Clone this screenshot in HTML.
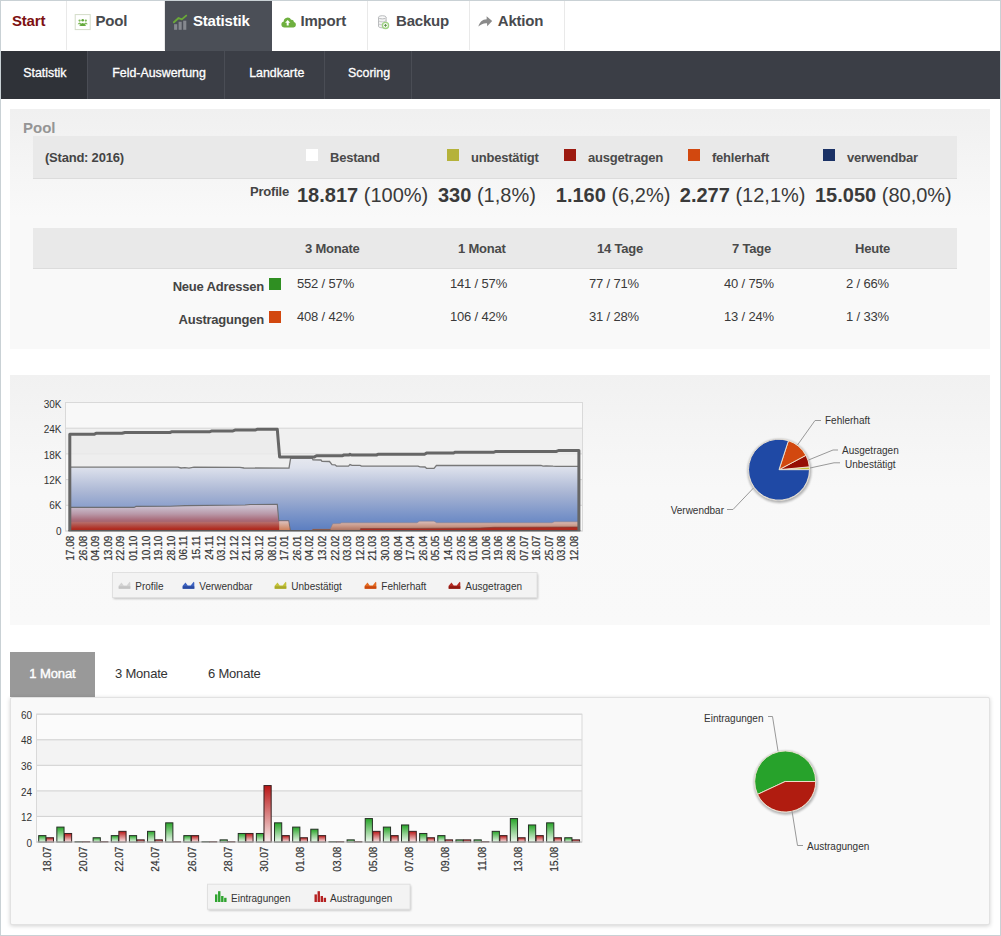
<!DOCTYPE html>
<html><head><meta charset="utf-8"><title>Statistik</title>
<style>
html,body{margin:0;padding:0;}
body{width:1001px;height:936px;overflow:hidden;background:#fff;font-family:"Liberation Sans",sans-serif;color:#333;position:relative;}
#frame{position:absolute;left:0;top:0;width:999px;height:934px;border:1px solid #c9d1d5;z-index:50;pointer-events:none;}
.abs{position:absolute;white-space:nowrap;}
.topnav{position:absolute;left:1px;top:1px;width:999px;height:49px;background:#fff;}
.tab{position:absolute;top:0;height:49px;border-right:1px solid #e9e9e9;box-sizing:border-box;font-weight:bold;font-size:15px;color:#484a4e;line-height:40px;letter-spacing:-0.2px;}
.tab span{position:absolute;top:0;}
.tab.act{background:#4b4f57;color:#fff;border-right:none;height:51px;}
.subnav{position:absolute;left:1px;top:51px;width:999px;height:47.5px;background:#3b3e46;}
.sub{position:absolute;top:0;height:47.5px;border-right:1px solid #4a4d55;box-sizing:border-box;color:#fff;font-size:12.4px;line-height:43px;font-weight:normal;-webkit-text-stroke:0.3px #fff;}
.sub.act{background:#2f3238;}
.panel{position:absolute;left:10px;width:980px;}
.b13{font-size:13px;font-weight:bold;color:#444;letter-spacing:-0.22px;}
.hd{font-size:13px;font-weight:bold;color:#4a4a4a;letter-spacing:-0.22px;}
.val{font-size:13px;color:#3a3a3a;letter-spacing:-0.17px;}
.big{font-size:20px;color:#3a3a3a;}
.big b{font-weight:bold;}
.sw{position:absolute;width:12px;height:12px;}
.lg{font-size:11px;color:#333;}
</style></head><body>
<div id="frame"></div>

<div class="topnav">
<div class="tab" style="left:0px;width:66px;"><span style="left:11px;color:#7d1111;">Start</span></div>
<div class="tab" style="left:66px;width:98px;"><span style="left:28.5px;">Pool</span></div>
<div class="tab act" style="left:164px;width:106.5px;"><span style="left:28px;">Statistik</span></div>
<div class="tab" style="left:270.5px;width:96.5px;"><span style="left:29.0px;">Import</span></div>
<div class="tab" style="left:367px;width:102px;"><span style="left:28px;">Backup</span></div>
<div class="tab" style="left:469px;width:94.5px;"><span style="left:27.80000000000001px;">Aktion</span></div>
<svg class="abs" style="left:72.5px;top:12.5px" width="18" height="18" viewBox="0 0 18 18">
<rect x="1.2" y="0.6" width="15" height="15" fill="#fff" stroke="#d3dcc8" stroke-width="1"/>
<circle cx="5.6" cy="6.6" r="1.15" fill="#7fba58"/><circle cx="8.7" cy="6.3" r="1.3" fill="#62a83a"/><circle cx="11.8" cy="6.6" r="1.15" fill="#7fba58"/>
<path d="M3.6 10.3 q2 -3.4 4 0z M9.8 10.3 q2 -3.4 4 0z" fill="#7fba58"/><path d="M5.2 11.4 q3.5 -5 7 0 q-3.5 1.4 -7 0z" fill="#62a83a"/>
</svg>
<svg class="abs" style="left:171px;top:12px" width="18" height="19" viewBox="0 0 18 19">
<rect x="2.1" y="11.2" width="3.1" height="5.6" fill="#85888e"/><rect x="6.6" y="8.8" width="3.1" height="8" fill="#85888e"/><rect x="11.2" y="7.7" width="3.1" height="9.1" fill="#85888e"/>
<path d="M1.9 9.3 L6.6 5 L9.8 6.4 L14.2 2.6" fill="none" stroke="#6aa838" stroke-width="1.9" stroke-linecap="round" stroke-linejoin="round"/>
</svg>
<svg class="abs" style="left:279px;top:14px" width="18" height="14" viewBox="0 0 18 14">
<path d="M4.4 12.5 a3.1 3.1 0 0 1 -0.7 -6.1 a3.9 3.9 0 0 1 7.4 -1.6 a2.6 2.6 0 0 1 2.9 2.1 a2.9 2.9 0 0 1 -0.5 5.6z" fill="#6fb03f"/>
<path d="M7.7 4.9 L10.3 7.8 H8.7 V10.6 H6.7 V7.8 H5.1z" fill="#fff"/>
</svg>
<svg class="abs" style="left:375px;top:13px" width="17" height="18" viewBox="0 0 17 18">
<path d="M2.5 3.3 v9 c0 2 7.6 2 7.6 0 v-9" fill="#f3f3f3" stroke="#b9bbbd" stroke-width="1"/>
<ellipse cx="6.3" cy="3.3" rx="3.8" ry="1.6" fill="#fafafa" stroke="#b9bbbd" stroke-width="1"/>
<path d="M2.5 6.3 c0 2 7.6 2 7.6 0 M2.5 9.3 c0 2 7.6 2 7.6 0" fill="none" stroke="#c4c6c8" stroke-width="1"/>
<circle cx="9.5" cy="11.4" r="3.1" fill="#f4faef" stroke="#9fd283" stroke-width="1.3"/>
<path d="M8.1 11.4 H10.9 M9.5 10 V12.8" stroke="#5a8a4a" stroke-width="0.9" fill="none"/>
</svg>
<svg class="abs" style="left:476px;top:14px" width="17" height="14" viewBox="0 0 17 14">
<path d="M9.6 1.3 L15.2 6.1 L10.2 11.2 L10 8.3 C6.6 8 4 9.3 1.4 11.6 C2.4 7.2 5.4 4.4 9.7 4.2z" fill="#8b8b8b"/>
</svg>
</div>
<div class="subnav">
<div class="sub act" style="left:0px;width:87px;"><span style="position:absolute;left:22.2px;top:0.6px;">Statistik</span></div>
<div class="sub" style="left:87px;width:137px;"><span style="position:absolute;left:24.200000000000003px;top:0.6px;">Feld-Auswertung</span></div>
<div class="sub" style="left:224px;width:100px;"><span style="position:absolute;left:24.19999999999999px;top:0.6px;">Landkarte</span></div>
<div class="sub" style="left:324px;width:87px;"><span style="position:absolute;left:23.100000000000023px;top:0.6px;">Scoring</span></div>
</div>
<div class="panel" style="top:109.2px;height:239.9px;background:linear-gradient(#f0f0f0,#f9f9f9 45%,#f9f9f9);"></div>
<div class="abs" style="left:23px;top:119px;font-size:15px;font-weight:bold;color:#959595;">Pool</div>
<div class="abs" style="left:33px;top:136px;width:924px;height:42.5px;background:#e9e9e9;border-bottom:1px solid #dcdcdc;box-sizing:border-box;"></div>
<div class="abs b13" style="left:45px;top:150px;">(Stand: 2016)</div>
<div class="sw" style="left:306.3px;top:148.6px;background:#ffffff;"></div>
<div class="abs hd" style="left:330px;top:150px;">Bestand</div>
<div class="sw" style="left:447.3px;top:148.6px;background:#b5b23a;"></div>
<div class="abs hd" style="left:471px;top:150px;">unbestätigt</div>
<div class="sw" style="left:564.3px;top:148.6px;background:#9c1a10;"></div>
<div class="abs hd" style="left:588px;top:150px;">ausgetragen</div>
<div class="sw" style="left:688.3px;top:148.6px;background:#d2480f;"></div>
<div class="abs hd" style="left:712px;top:150px;">fehlerhaft</div>
<div class="sw" style="left:823.3px;top:148.6px;background:#1b3266;"></div>
<div class="abs hd" style="left:847px;top:150px;">verwendbar</div>
<div class="abs b13" style="left:189px;width:100px;text-align:right;top:184px;">Profile</div>
<div class="abs big" style="left:297px;top:184px;"><b>18.817</b> (100%)</div>
<div class="abs big" style="left:438px;top:184px;"><b>330</b> (1,8%)</div>
<div class="abs big" style="left:555.8px;top:184px;"><b>1.160</b> (6,2%)</div>
<div class="abs big" style="left:679.8px;top:184px;"><b>2.277</b> (12,1%)</div>
<div class="abs big" style="left:815px;top:184px;"><b>15.050</b> (80,0%)</div>
<div class="abs" style="left:33px;top:228.4px;width:924px;height:40.4px;background:#e9e9e9;border-bottom:1px solid #dcdcdc;box-sizing:border-box;"></div>
<div class="abs hd" style="left:305px;top:241px;">3 Monate</div>
<div class="abs hd" style="left:458px;top:241px;">1 Monat</div>
<div class="abs hd" style="left:597px;top:241px;">14 Tage</div>
<div class="abs hd" style="left:732px;top:241px;">7 Tage</div>
<div class="abs hd" style="left:855px;top:241px;">Heute</div>
<div class="abs b13" style="left:64px;width:200px;text-align:right;top:279.3px;">Neue Adressen</div>
<div class="sw" style="left:269px;top:278.3px;background:#2f8f22;"></div>
<div class="abs val" style="left:297px;top:275.6px;">552 / 57%</div>
<div class="abs val" style="left:450px;top:275.6px;">141 / 57%</div>
<div class="abs val" style="left:589px;top:275.6px;">77 / 71%</div>
<div class="abs val" style="left:724px;top:275.6px;">40 / 75%</div>
<div class="abs val" style="left:846px;top:275.6px;">2 / 66%</div>
<div class="abs b13" style="left:64px;width:200px;text-align:right;top:312.4px;">Austragungen</div>
<div class="sw" style="left:269px;top:311.4px;background:#d2480f;"></div>
<div class="abs val" style="left:297px;top:309px;">408 / 42%</div>
<div class="abs val" style="left:450px;top:309px;">106 / 42%</div>
<div class="abs val" style="left:589px;top:309px;">31 / 28%</div>
<div class="abs val" style="left:724px;top:309px;">13 / 24%</div>
<div class="abs val" style="left:846px;top:309px;">1 / 33%</div>
<div class="panel" style="top:375px;height:250px;background:linear-gradient(#f1f1f1,#f8f8f8 45%,#f9f9f9);"></div>
<svg class="abs" style="left:0;top:375px" width="1001" height="250" viewBox="0 375 1001 250" font-family="Liberation Sans, sans-serif">
<defs>
<linearGradient id="gblue" gradientUnits="userSpaceOnUse" x1="0" y1="458" x2="0" y2="531"><stop offset="0" stop-color="#e6e8ef"/><stop offset="0.13" stop-color="#dde1ec"/><stop offset="0.47" stop-color="#aab6d4"/><stop offset="0.78" stop-color="#7a94c8"/><stop offset="1" stop-color="#5a7dc0"/></linearGradient>
<linearGradient id="gred" gradientUnits="userSpaceOnUse" x1="0" y1="504" x2="0" y2="531"><stop offset="0" stop-color="#d3c8d4"/><stop offset="0.13" stop-color="#c9bccb"/><stop offset="0.37" stop-color="#b998a8"/><stop offset="0.6" stop-color="#a86a78"/><stop offset="0.66" stop-color="#a8666e"/><stop offset="0.69" stop-color="#b86a66"/><stop offset="0.78" stop-color="#b2524a"/><stop offset="0.92" stop-color="#b02c21"/><stop offset="1" stop-color="#a8281e"/></linearGradient>
<linearGradient id="gred2" gradientUnits="userSpaceOnUse" x1="0" y1="521" x2="0" y2="531"><stop offset="0" stop-color="#dcc0bc"/><stop offset="0.5" stop-color="#c89888"/><stop offset="1" stop-color="#a86a58"/></linearGradient>
<linearGradient id="gtan0" gradientUnits="userSpaceOnUse" x1="0" y1="521" x2="0" y2="531"><stop offset="0" stop-color="#dcc4c0"/><stop offset="1" stop-color="#cc7a52"/></linearGradient>
<linearGradient id="ggreen" x1="0" y1="0" x2="0" y2="1"><stop offset="0" stop-color="#27a428"/><stop offset="1" stop-color="#eef8ee"/></linearGradient>
<linearGradient id="gbarred" x1="0" y1="0" x2="0" y2="1"><stop offset="0" stop-color="#b91616"/><stop offset="1" stop-color="#f8eaea"/></linearGradient>
<filter id="sh" x="-20%" y="-20%" width="140%" height="140%"><feGaussianBlur stdDeviation="1.2"/></filter>
</defs>
<rect x="65.5" y="402.5" width="517.0" height="128.5" fill="#f8f8f8"/>
<rect x="65.5" y="428.2" width="517.0" height="25.7" fill="#f0f0f0"/>
<rect x="65.5" y="479.6" width="517.0" height="25.7" fill="#f0f0f0"/>
<line x1="65.5" x2="582.5" y1="402.5" y2="402.5" stroke="#d6d6d6" stroke-width="1"/>
<line x1="65.5" x2="582.5" y1="428.2" y2="428.2" stroke="#d6d6d6" stroke-width="1"/>
<line x1="65.5" x2="582.5" y1="453.9" y2="453.9" stroke="#d6d6d6" stroke-width="1"/>
<line x1="65.5" x2="582.5" y1="479.6" y2="479.6" stroke="#d6d6d6" stroke-width="1"/>
<line x1="65.5" x2="582.5" y1="505.3" y2="505.3" stroke="#d6d6d6" stroke-width="1"/>
<line x1="65.5" x2="582.5" y1="531.0" y2="531.0" stroke="#d6d6d6" stroke-width="1"/>
<rect x="65.5" y="402.5" width="517.0" height="128.5" fill="none" stroke="#d9d9d9"/>
<text x="61.5" y="407.9" font-size="10" text-anchor="end" fill="#333">30K</text>
<text x="61.5" y="433.3" font-size="10" text-anchor="end" fill="#333">24K</text>
<text x="61.5" y="458.6" font-size="10" text-anchor="end" fill="#333">18K</text>
<text x="61.5" y="484.0" font-size="10" text-anchor="end" fill="#333">12K</text>
<text x="61.5" y="509.3" font-size="10" text-anchor="end" fill="#333">6K</text>
<text x="61.5" y="534.6" font-size="10" text-anchor="end" fill="#333">0</text>
<polygon points="69.8,531 69.8,434.3 94,434.3 96,433.3 122,433.3 125,432.5 170,432.5 172,431.7 210,431.7 212,430.9 233,430.9 235,430.1 255,430.1 257,429.3 277.3,429.3 279.6,456.9 314.5,456.9 316.5,455.8 342,455.8 344,455 349,455 350,454.3 351.5,455 376.5,455 378.5,454.2 424.5,454.2 426.5,453.1 453.3,453.1 455.3,452.2 494,452.2 496,451.4 556.5,451.4 558.5,450.5 578.9,450.5 578.9,531" fill="#ebebeb" opacity="0.8"/>
<polygon points="69.8,531 69.8,467.2 178,467.2 181,468 185,467.6 189,468.1 194,467.2 240,467.3 244,468 289,468.1 290.6,458.3 312.4,458.3 313,459.8 321,460 322,461.3 329.5,461.5 332,464.6 335,464.8 336.5,466.1 348.5,466.1 350,464.6 352,465.4 360,465.4 361.5,466.1 418,466.1 420,466.9 425,467 426.5,468.3 434,468.3 436.4,465.5 541,465.5 543,466.2 546,465.8 553,466.2 556,466.3 578.9,466.3 578.9,531" fill="url(#gblue)"/>
<polygon points="69.8,531 69.8,507.4 134,507.4 136,506.4 170,506.2 185,505.6 245,505 250,504.5 277.3,504.4 278.8,520.8 288.6,520.8 290.5,531" fill="url(#gred)" />
<polyline points="69.8,507.4 134,507.4 136,506.4 170,506.2 185,505.6 245,505 250,504.5 277.3,504.4 278.8,520.8 288.6,520.8 290.5,531" fill="none" stroke="#6e6e72" stroke-width="1.1"/>
<polygon points="279.2,531 279.2,521.3 288.3,521.3 290,531" fill="url(#gtan0)"/>
<polygon points="312,531 312.6,529 330.3,529 332.7,523.8 340,523.6 341.5,522.8 417,522.8 419.5,521.2 434,521.2 436.7,522.8 552,522.8 554.5,521.8 578.9,521.8 578.9,531" fill="url(#gred2)"/>
<polyline points="312,531 312.6,529 330.3,529 332.7,523.8 340,523.6 341.5,522.8 417,522.8 419.5,521.2 434,521.2 436.7,522.8 552,522.8 554.5,521.8 578.9,521.8" fill="none" stroke="#8a7a80" stroke-width="0.7" opacity="0.7"/>
<polygon points="312,531 312.6,529 330.3,529 331.2,531" fill="#8a5a4c"/>
<polygon points="360,531 360.6,528.6 420,528.4 480,528 494,527.3 578.9,527 578.9,531" fill="#ae2a1f"/>
<polyline points="360,531 360.6,528.6 420,528.4 480,528 494,527.3 578.9,527" fill="none" stroke="#80443c" stroke-width="0.7"/>
<polyline points="69.8,467.2 178,467.2 181,468 185,467.6 189,468.1 194,467.2 240,467.3 244,468 289,468.1 290.6,458.3 312.4,458.3 313,459.8 321,460 322,461.3 329.5,461.5 332,464.6 335,464.8 336.5,466.1 348.5,466.1 350,464.6 352,465.4 360,465.4 361.5,466.1 418,466.1 420,466.9 425,467 426.5,468.3 434,468.3 436.4,465.5 541,465.5 543,466.2 546,465.8 553,466.2 556,466.3 578.9,466.3" fill="none" stroke="#787878" stroke-width="1.3"/>
<line x1="68.4" x2="580.3" y1="530.8" y2="530.8" stroke="#5a5a5a" stroke-width="1.5"/>
<polyline points="69.8,531 69.8,434.3 94,434.3 96,433.3 122,433.3 125,432.5 170,432.5 172,431.7 210,431.7 212,430.9 233,430.9 235,430.1 255,430.1 257,429.3 277.3,429.3 279.6,456.9 314.5,456.9 316.5,455.8 342,455.8 344,455 349,455 350,454.3 351.5,455 376.5,455 378.5,454.2 424.5,454.2 426.5,453.1 453.3,453.1 455.3,452.2 494,452.2 496,451.4 556.5,451.4 558.5,450.5 578.9,450.5 578.9,531" fill="none" stroke="#666" stroke-width="3" stroke-linejoin="round"/>
<text transform="translate(74.00,535.7) rotate(-90)" font-size="10" text-anchor="end" fill="#333" stroke="#333" stroke-width="0.2">17.08</text>
<text transform="translate(86.60,535.7) rotate(-90)" font-size="10" text-anchor="end" fill="#333" stroke="#333" stroke-width="0.2">26.08</text>
<text transform="translate(99.20,535.7) rotate(-90)" font-size="10" text-anchor="end" fill="#333" stroke="#333" stroke-width="0.2">04.09</text>
<text transform="translate(111.80,535.7) rotate(-90)" font-size="10" text-anchor="end" fill="#333" stroke="#333" stroke-width="0.2">13.09</text>
<text transform="translate(124.40,535.7) rotate(-90)" font-size="10" text-anchor="end" fill="#333" stroke="#333" stroke-width="0.2">22.09</text>
<text transform="translate(137.00,535.7) rotate(-90)" font-size="10" text-anchor="end" fill="#333" stroke="#333" stroke-width="0.2">01.10</text>
<text transform="translate(149.60,535.7) rotate(-90)" font-size="10" text-anchor="end" fill="#333" stroke="#333" stroke-width="0.2">10.10</text>
<text transform="translate(162.20,535.7) rotate(-90)" font-size="10" text-anchor="end" fill="#333" stroke="#333" stroke-width="0.2">19.10</text>
<text transform="translate(174.80,535.7) rotate(-90)" font-size="10" text-anchor="end" fill="#333" stroke="#333" stroke-width="0.2">28.10</text>
<text transform="translate(187.40,535.7) rotate(-90)" font-size="10" text-anchor="end" fill="#333" stroke="#333" stroke-width="0.2">06.11</text>
<text transform="translate(200.00,535.7) rotate(-90)" font-size="10" text-anchor="end" fill="#333" stroke="#333" stroke-width="0.2">15.11</text>
<text transform="translate(212.60,535.7) rotate(-90)" font-size="10" text-anchor="end" fill="#333" stroke="#333" stroke-width="0.2">24.11</text>
<text transform="translate(225.20,535.7) rotate(-90)" font-size="10" text-anchor="end" fill="#333" stroke="#333" stroke-width="0.2">03.12</text>
<text transform="translate(237.80,535.7) rotate(-90)" font-size="10" text-anchor="end" fill="#333" stroke="#333" stroke-width="0.2">12.12</text>
<text transform="translate(250.40,535.7) rotate(-90)" font-size="10" text-anchor="end" fill="#333" stroke="#333" stroke-width="0.2">21.12</text>
<text transform="translate(263.00,535.7) rotate(-90)" font-size="10" text-anchor="end" fill="#333" stroke="#333" stroke-width="0.2">30.12</text>
<text transform="translate(275.60,535.7) rotate(-90)" font-size="10" text-anchor="end" fill="#333" stroke="#333" stroke-width="0.2">08.01</text>
<text transform="translate(288.20,535.7) rotate(-90)" font-size="10" text-anchor="end" fill="#333" stroke="#333" stroke-width="0.2">17.01</text>
<text transform="translate(300.80,535.7) rotate(-90)" font-size="10" text-anchor="end" fill="#333" stroke="#333" stroke-width="0.2">26.01</text>
<text transform="translate(313.40,535.7) rotate(-90)" font-size="10" text-anchor="end" fill="#333" stroke="#333" stroke-width="0.2">04.02</text>
<text transform="translate(326.00,535.7) rotate(-90)" font-size="10" text-anchor="end" fill="#333" stroke="#333" stroke-width="0.2">13.02</text>
<text transform="translate(338.60,535.7) rotate(-90)" font-size="10" text-anchor="end" fill="#333" stroke="#333" stroke-width="0.2">22.02</text>
<text transform="translate(351.20,535.7) rotate(-90)" font-size="10" text-anchor="end" fill="#333" stroke="#333" stroke-width="0.2">03.03</text>
<text transform="translate(363.80,535.7) rotate(-90)" font-size="10" text-anchor="end" fill="#333" stroke="#333" stroke-width="0.2">12.03</text>
<text transform="translate(376.40,535.7) rotate(-90)" font-size="10" text-anchor="end" fill="#333" stroke="#333" stroke-width="0.2">21.03</text>
<text transform="translate(389.00,535.7) rotate(-90)" font-size="10" text-anchor="end" fill="#333" stroke="#333" stroke-width="0.2">30.03</text>
<text transform="translate(401.60,535.7) rotate(-90)" font-size="10" text-anchor="end" fill="#333" stroke="#333" stroke-width="0.2">08.04</text>
<text transform="translate(414.20,535.7) rotate(-90)" font-size="10" text-anchor="end" fill="#333" stroke="#333" stroke-width="0.2">17.04</text>
<text transform="translate(426.80,535.7) rotate(-90)" font-size="10" text-anchor="end" fill="#333" stroke="#333" stroke-width="0.2">26.04</text>
<text transform="translate(439.40,535.7) rotate(-90)" font-size="10" text-anchor="end" fill="#333" stroke="#333" stroke-width="0.2">05.05</text>
<text transform="translate(452.00,535.7) rotate(-90)" font-size="10" text-anchor="end" fill="#333" stroke="#333" stroke-width="0.2">14.05</text>
<text transform="translate(464.60,535.7) rotate(-90)" font-size="10" text-anchor="end" fill="#333" stroke="#333" stroke-width="0.2">23.05</text>
<text transform="translate(477.20,535.7) rotate(-90)" font-size="10" text-anchor="end" fill="#333" stroke="#333" stroke-width="0.2">01.06</text>
<text transform="translate(489.80,535.7) rotate(-90)" font-size="10" text-anchor="end" fill="#333" stroke="#333" stroke-width="0.2">10.06</text>
<text transform="translate(502.40,535.7) rotate(-90)" font-size="10" text-anchor="end" fill="#333" stroke="#333" stroke-width="0.2">19.06</text>
<text transform="translate(515.00,535.7) rotate(-90)" font-size="10" text-anchor="end" fill="#333" stroke="#333" stroke-width="0.2">28.06</text>
<text transform="translate(527.60,535.7) rotate(-90)" font-size="10" text-anchor="end" fill="#333" stroke="#333" stroke-width="0.2">07.07</text>
<text transform="translate(540.20,535.7) rotate(-90)" font-size="10" text-anchor="end" fill="#333" stroke="#333" stroke-width="0.2">16.07</text>
<text transform="translate(552.80,535.7) rotate(-90)" font-size="10" text-anchor="end" fill="#333" stroke="#333" stroke-width="0.2">25.07</text>
<text transform="translate(565.40,535.7) rotate(-90)" font-size="10" text-anchor="end" fill="#333" stroke="#333" stroke-width="0.2">03.08</text>
<text transform="translate(578.00,535.7) rotate(-90)" font-size="10" text-anchor="end" fill="#333" stroke="#333" stroke-width="0.2">12.08</text>
<rect x="113.5" y="574" width="424.5" height="25" fill="#000" opacity="0.22" filter="url(#sh)"/>
<rect x="112.5" y="572.5" width="424.5" height="25" fill="#f3f3f3" stroke="#e0e0e0"/>
<path d="M118.7 588.7 V585.7 L121.5 582.5 L123.7 585.5 L126.7 585.5 L129.7 581.7 L130.3 582.5 V588.7z" fill="#d4d4d4"/><rect x="118.7" y="586.3000000000001" width="11.6" height="2.4" fill="#c4c4c4"/>
<text x="135.3" y="590.1" font-size="10" fill="#333">Profile</text>
<path d="M182.7 588.7 V585.7 L185.5 582.5 L187.7 585.5 L190.7 585.5 L193.7 581.7 L194.29999999999998 582.5 V588.7z" fill="#3d62c0"/><rect x="182.7" y="586.3000000000001" width="11.6" height="2.4" fill="#2a4aa0"/>
<text x="199.3" y="590.1" font-size="10" fill="#333">Verwendbar</text>
<path d="M274.7 588.7 V585.7 L277.5 582.5 L279.7 585.5 L282.7 585.5 L285.7 581.7 L286.3 582.5 V588.7z" fill="#c3c23a"/><rect x="274.7" y="586.3000000000001" width="11.6" height="2.4" fill="#a9a82a"/>
<text x="291.3" y="590.1" font-size="10" fill="#333">Unbestätigt</text>
<path d="M364.7 588.7 V585.7 L367.5 582.5 L369.7 585.5 L372.7 585.5 L375.7 581.7 L376.3 582.5 V588.7z" fill="#e26a22"/><rect x="364.7" y="586.3000000000001" width="11.6" height="2.4" fill="#c9480f"/>
<text x="381.3" y="590.1" font-size="10" fill="#333">Fehlerhaft</text>
<path d="M448.7 588.7 V585.7 L451.5 582.5 L453.7 585.5 L456.7 585.5 L459.7 581.7 L460.3 582.5 V588.7z" fill="#b32a22"/><rect x="448.7" y="586.3000000000001" width="11.6" height="2.4" fill="#8e1810"/>
<text x="465.3" y="590.1" font-size="10" fill="#333">Ausgetragen</text>
<circle cx="779.5" cy="470.9" r="32.0" fill="#000" opacity="0.28" filter="url(#sh)"/>
<circle cx="779.0" cy="469.7" r="31.1" fill="#dcdcdc"/>
<path d="M779.0 469.7 L809.50 469.70 A30.5 30.5 0 0 0 809.36 466.83z" fill="#c3c23a" stroke="#f2e6d4" stroke-width="0.9" stroke-linejoin="round"/>
<path d="M779.0 469.7 L809.36 466.83 A30.5 30.5 0 0 0 805.91 455.34z" fill="#960f04" stroke="#f2e6d4" stroke-width="0.9" stroke-linejoin="round"/>
<path d="M779.0 469.7 L805.91 455.34 A30.5 30.5 0 0 0 788.43 440.69z" fill="#d2480f" stroke="#f2e6d4" stroke-width="0.9" stroke-linejoin="round"/>
<path d="M779.0 469.7 L788.43 440.69 A30.5 30.5 0 1 0 809.50 469.70z" fill="#1f49a5" stroke="#f2e6d4" stroke-width="0.9" stroke-linejoin="round"/>
<g fill="none" stroke="#999" stroke-width="1">
<polyline points="797.5,445 815,420.5 821,420.5"/>
<polyline points="808.5,460 833,450 838,450"/>
<polyline points="810,468 834,462.8 840,462.8"/>
<polyline points="753.5,488 733,509.5 727,509.5"/>
</g>
<text x="825" y="424" font-size="10" fill="#333" text-anchor="start">Fehlerhaft</text>
<text x="842" y="454.3" font-size="10" fill="#333" text-anchor="start">Ausgetragen</text>
<text x="845" y="467.5" font-size="10" fill="#333" text-anchor="start">Unbestätigt</text>
<text x="724" y="513.5" font-size="10" fill="#333" text-anchor="end">Verwendbar</text>
</svg>
<div class="abs" style="left:10px;top:652px;width:85px;height:45px;background:#999;color:#fff;font-size:13px;line-height:44px;text-align:center;letter-spacing:-0.1px;-webkit-text-stroke:0.4px #fff;">1 Monat</div>
<div class="abs" style="left:115px;top:652px;height:45px;font-size:13px;line-height:44px;color:#333;letter-spacing:-0.2px;">3 Monate</div>
<div class="abs" style="left:208px;top:652px;height:45px;font-size:13px;line-height:44px;color:#333;letter-spacing:-0.2px;">6 Monate</div>
<div class="panel" style="top:697px;height:228px;background:#f9f9f9;border:1px solid #e2e2e2;box-sizing:border-box;box-shadow:0 1px 4px rgba(0,0,0,0.18);border-radius:2px;"></div>
<svg class="abs" style="left:0;top:698px" width="1001" height="226" viewBox="0 698 1001 226" font-family="Liberation Sans, sans-serif">
<rect x="36.5" y="714.2" width="545.5" height="127.79999999999995" fill="#fbfbfb"/>
<rect x="36.5" y="739.8" width="545.5" height="25.6" fill="#f3f3f3"/>
<rect x="36.5" y="790.9" width="545.5" height="25.6" fill="#f3f3f3"/>
<line x1="36.5" x2="582" y1="714.2" y2="714.2" stroke="#cfcfcf" stroke-width="1"/>
<line x1="36.5" x2="582" y1="739.8" y2="739.8" stroke="#cfcfcf" stroke-width="1"/>
<line x1="36.5" x2="582" y1="765.3" y2="765.3" stroke="#cfcfcf" stroke-width="1"/>
<line x1="36.5" x2="582" y1="790.9" y2="790.9" stroke="#cfcfcf" stroke-width="1"/>
<line x1="36.5" x2="582" y1="816.4" y2="816.4" stroke="#cfcfcf" stroke-width="1"/>
<line x1="36.5" x2="582" y1="842.0" y2="842.0" stroke="#cfcfcf" stroke-width="1"/>
<rect x="36.5" y="714.2" width="545.5" height="127.79999999999995" fill="none" stroke="#d9d9d9"/>
<text x="32" y="718.8" font-size="10" text-anchor="end" fill="#333">60</text>
<text x="32" y="744.4" font-size="10" text-anchor="end" fill="#333">48</text>
<text x="32" y="769.9" font-size="10" text-anchor="end" fill="#333">36</text>
<text x="32" y="795.5" font-size="10" text-anchor="end" fill="#333">24</text>
<text x="32" y="821.0" font-size="10" text-anchor="end" fill="#333">12</text>
<text x="32" y="846.6" font-size="10" text-anchor="end" fill="#333">0</text>
<rect x="38.70" y="835.61" width="7.2" height="6.39" fill="url(#ggreen)" stroke="#263026" stroke-width="1"/>
<rect x="46.30" y="837.74" width="7.2" height="4.26" fill="url(#gbarred)" stroke="#3a2222" stroke-width="1"/>
<rect x="56.84" y="827.09" width="7.2" height="14.91" fill="url(#ggreen)" stroke="#263026" stroke-width="1"/>
<rect x="64.44" y="833.48" width="7.2" height="8.52" fill="url(#gbarred)" stroke="#3a2222" stroke-width="1"/>
<rect x="74.98" y="841.68" width="7.2" height="0.32" fill="url(#ggreen)" stroke="#263026" stroke-width="1"/>
<rect x="82.58" y="841.68" width="7.2" height="0.32" fill="url(#gbarred)" stroke="#3a2222" stroke-width="1"/>
<rect x="93.12" y="837.74" width="7.2" height="4.26" fill="url(#ggreen)" stroke="#263026" stroke-width="1"/>
<rect x="100.72" y="841.68" width="7.2" height="0.32" fill="url(#gbarred)" stroke="#3a2222" stroke-width="1"/>
<rect x="111.26" y="835.61" width="7.2" height="6.39" fill="url(#ggreen)" stroke="#263026" stroke-width="1"/>
<rect x="118.86" y="831.35" width="7.2" height="10.65" fill="url(#gbarred)" stroke="#3a2222" stroke-width="1"/>
<rect x="129.40" y="835.61" width="7.2" height="6.39" fill="url(#ggreen)" stroke="#263026" stroke-width="1"/>
<rect x="137.00" y="839.87" width="7.2" height="2.13" fill="url(#gbarred)" stroke="#3a2222" stroke-width="1"/>
<rect x="147.54" y="831.35" width="7.2" height="10.65" fill="url(#ggreen)" stroke="#263026" stroke-width="1"/>
<rect x="155.14" y="839.87" width="7.2" height="2.13" fill="url(#gbarred)" stroke="#3a2222" stroke-width="1"/>
<rect x="165.68" y="822.83" width="7.2" height="19.17" fill="url(#ggreen)" stroke="#263026" stroke-width="1"/>
<rect x="173.28" y="841.68" width="7.2" height="0.32" fill="url(#gbarred)" stroke="#3a2222" stroke-width="1"/>
<rect x="183.82" y="835.61" width="7.2" height="6.39" fill="url(#ggreen)" stroke="#263026" stroke-width="1"/>
<rect x="191.42" y="835.61" width="7.2" height="6.39" fill="url(#gbarred)" stroke="#3a2222" stroke-width="1"/>
<rect x="201.96" y="841.68" width="7.2" height="0.32" fill="url(#ggreen)" stroke="#263026" stroke-width="1"/>
<rect x="209.56" y="841.68" width="7.2" height="0.32" fill="url(#gbarred)" stroke="#3a2222" stroke-width="1"/>
<rect x="220.10" y="839.87" width="7.2" height="2.13" fill="url(#ggreen)" stroke="#263026" stroke-width="1"/>
<rect x="227.70" y="841.68" width="7.2" height="0.32" fill="url(#gbarred)" stroke="#3a2222" stroke-width="1"/>
<rect x="238.24" y="833.48" width="7.2" height="8.52" fill="url(#ggreen)" stroke="#263026" stroke-width="1"/>
<rect x="245.84" y="833.48" width="7.2" height="8.52" fill="url(#gbarred)" stroke="#3a2222" stroke-width="1"/>
<rect x="256.38" y="833.48" width="7.2" height="8.52" fill="url(#ggreen)" stroke="#263026" stroke-width="1"/>
<rect x="263.98" y="785.56" width="7.2" height="56.44" fill="url(#gbarred)" stroke="#3a2222" stroke-width="1"/>
<rect x="274.52" y="822.83" width="7.2" height="19.17" fill="url(#ggreen)" stroke="#263026" stroke-width="1"/>
<rect x="282.12" y="835.61" width="7.2" height="6.39" fill="url(#gbarred)" stroke="#3a2222" stroke-width="1"/>
<rect x="292.66" y="827.09" width="7.2" height="14.91" fill="url(#ggreen)" stroke="#263026" stroke-width="1"/>
<rect x="300.26" y="837.74" width="7.2" height="4.26" fill="url(#gbarred)" stroke="#3a2222" stroke-width="1"/>
<rect x="310.80" y="829.22" width="7.2" height="12.78" fill="url(#ggreen)" stroke="#263026" stroke-width="1"/>
<rect x="318.40" y="835.61" width="7.2" height="6.39" fill="url(#gbarred)" stroke="#3a2222" stroke-width="1"/>
<rect x="328.94" y="841.68" width="7.2" height="0.32" fill="url(#ggreen)" stroke="#263026" stroke-width="1"/>
<rect x="336.54" y="841.68" width="7.2" height="0.32" fill="url(#gbarred)" stroke="#3a2222" stroke-width="1"/>
<rect x="347.08" y="839.87" width="7.2" height="2.13" fill="url(#ggreen)" stroke="#263026" stroke-width="1"/>
<rect x="354.68" y="841.68" width="7.2" height="0.32" fill="url(#gbarred)" stroke="#3a2222" stroke-width="1"/>
<rect x="365.22" y="818.57" width="7.2" height="23.43" fill="url(#ggreen)" stroke="#263026" stroke-width="1"/>
<rect x="372.82" y="831.35" width="7.2" height="10.65" fill="url(#gbarred)" stroke="#3a2222" stroke-width="1"/>
<rect x="383.36" y="827.09" width="7.2" height="14.91" fill="url(#ggreen)" stroke="#263026" stroke-width="1"/>
<rect x="390.96" y="835.61" width="7.2" height="6.39" fill="url(#gbarred)" stroke="#3a2222" stroke-width="1"/>
<rect x="401.50" y="824.96" width="7.2" height="17.04" fill="url(#ggreen)" stroke="#263026" stroke-width="1"/>
<rect x="409.10" y="831.35" width="7.2" height="10.65" fill="url(#gbarred)" stroke="#3a2222" stroke-width="1"/>
<rect x="419.64" y="833.48" width="7.2" height="8.52" fill="url(#ggreen)" stroke="#263026" stroke-width="1"/>
<rect x="427.24" y="837.74" width="7.2" height="4.26" fill="url(#gbarred)" stroke="#3a2222" stroke-width="1"/>
<rect x="437.78" y="835.61" width="7.2" height="6.39" fill="url(#ggreen)" stroke="#263026" stroke-width="1"/>
<rect x="445.38" y="839.87" width="7.2" height="2.13" fill="url(#gbarred)" stroke="#3a2222" stroke-width="1"/>
<rect x="455.92" y="839.87" width="7.2" height="2.13" fill="url(#ggreen)" stroke="#263026" stroke-width="1"/>
<rect x="463.52" y="839.87" width="7.2" height="2.13" fill="url(#gbarred)" stroke="#3a2222" stroke-width="1"/>
<rect x="474.06" y="839.87" width="7.2" height="2.13" fill="url(#ggreen)" stroke="#263026" stroke-width="1"/>
<rect x="481.66" y="841.68" width="7.2" height="0.32" fill="url(#gbarred)" stroke="#3a2222" stroke-width="1"/>
<rect x="492.20" y="831.35" width="7.2" height="10.65" fill="url(#ggreen)" stroke="#263026" stroke-width="1"/>
<rect x="499.80" y="835.61" width="7.2" height="6.39" fill="url(#gbarred)" stroke="#3a2222" stroke-width="1"/>
<rect x="510.34" y="818.57" width="7.2" height="23.43" fill="url(#ggreen)" stroke="#263026" stroke-width="1"/>
<rect x="517.94" y="837.74" width="7.2" height="4.26" fill="url(#gbarred)" stroke="#3a2222" stroke-width="1"/>
<rect x="528.48" y="824.96" width="7.2" height="17.04" fill="url(#ggreen)" stroke="#263026" stroke-width="1"/>
<rect x="536.08" y="835.61" width="7.2" height="6.39" fill="url(#gbarred)" stroke="#3a2222" stroke-width="1"/>
<rect x="546.62" y="822.83" width="7.2" height="19.17" fill="url(#ggreen)" stroke="#263026" stroke-width="1"/>
<rect x="554.22" y="837.74" width="7.2" height="4.26" fill="url(#gbarred)" stroke="#3a2222" stroke-width="1"/>
<rect x="564.76" y="837.74" width="7.2" height="4.26" fill="url(#ggreen)" stroke="#263026" stroke-width="1"/>
<rect x="572.36" y="839.87" width="7.2" height="2.13" fill="url(#gbarred)" stroke="#3a2222" stroke-width="1"/>
<line x1="36.5" x2="582" y1="842" y2="842" stroke="#c4c4c4" stroke-width="1"/>
<text transform="translate(50.80,846.6) rotate(-90)" font-size="10" text-anchor="end" fill="#333" stroke="#333" stroke-width="0.2">18.07</text>
<text transform="translate(87.03,846.6) rotate(-90)" font-size="10" text-anchor="end" fill="#333" stroke="#333" stroke-width="0.2">20.07</text>
<text transform="translate(123.26,846.6) rotate(-90)" font-size="10" text-anchor="end" fill="#333" stroke="#333" stroke-width="0.2">22.07</text>
<text transform="translate(159.49,846.6) rotate(-90)" font-size="10" text-anchor="end" fill="#333" stroke="#333" stroke-width="0.2">24.07</text>
<text transform="translate(195.72,846.6) rotate(-90)" font-size="10" text-anchor="end" fill="#333" stroke="#333" stroke-width="0.2">26.07</text>
<text transform="translate(231.95,846.6) rotate(-90)" font-size="10" text-anchor="end" fill="#333" stroke="#333" stroke-width="0.2">28.07</text>
<text transform="translate(268.18,846.6) rotate(-90)" font-size="10" text-anchor="end" fill="#333" stroke="#333" stroke-width="0.2">30.07</text>
<text transform="translate(304.41,846.6) rotate(-90)" font-size="10" text-anchor="end" fill="#333" stroke="#333" stroke-width="0.2">01.08</text>
<text transform="translate(340.64,846.6) rotate(-90)" font-size="10" text-anchor="end" fill="#333" stroke="#333" stroke-width="0.2">03.08</text>
<text transform="translate(376.87,846.6) rotate(-90)" font-size="10" text-anchor="end" fill="#333" stroke="#333" stroke-width="0.2">05.08</text>
<text transform="translate(413.10,846.6) rotate(-90)" font-size="10" text-anchor="end" fill="#333" stroke="#333" stroke-width="0.2">07.08</text>
<text transform="translate(449.33,846.6) rotate(-90)" font-size="10" text-anchor="end" fill="#333" stroke="#333" stroke-width="0.2">09.08</text>
<text transform="translate(485.56,846.6) rotate(-90)" font-size="10" text-anchor="end" fill="#333" stroke="#333" stroke-width="0.2">11.08</text>
<text transform="translate(521.79,846.6) rotate(-90)" font-size="10" text-anchor="end" fill="#333" stroke="#333" stroke-width="0.2">13.08</text>
<text transform="translate(558.02,846.6) rotate(-90)" font-size="10" text-anchor="end" fill="#333" stroke="#333" stroke-width="0.2">15.08</text>
<rect x="208.5" y="885.6" width="202.5" height="25" fill="#000" opacity="0.22" filter="url(#sh)"/>
<rect x="207.5" y="884.2" width="202.5" height="25" fill="#f3f3f3" stroke="#e0e0e0"/>
<rect x="215" y="894.4000000000001" width="2.4" height="7.6" fill="#2fa32f"/><rect x="218.05" y="891.2" width="2.4" height="10.8" fill="#2fa32f"/><rect x="221.1" y="896.0" width="2.4" height="6" fill="#2fa32f"/><rect x="224.15" y="897.8000000000001" width="2.4" height="4.2" fill="#2fa32f"/>
<text x="231" y="901.8" font-size="10" fill="#333">Eintragungen</text>
<rect x="314.5" y="894.4000000000001" width="2.4" height="7.6" fill="#b52020"/><rect x="317.55" y="891.2" width="2.4" height="10.8" fill="#b52020"/><rect x="320.6" y="896.0" width="2.4" height="6" fill="#b52020"/><rect x="323.65" y="897.8000000000001" width="2.4" height="4.2" fill="#b52020"/>
<text x="330" y="901.8" font-size="10" fill="#333">Austragungen</text>
<circle cx="785.7" cy="782.7" r="32.0" fill="#000" opacity="0.28" filter="url(#sh)"/>
<circle cx="785.2" cy="781.5" r="31.1" fill="#dcdcdc"/>
<path d="M785.2 781.5 L815.70 781.50 A30.5 30.5 0 1 0 757.56 794.39z" fill="#27a22b" stroke="#f2e6d4" stroke-width="0.9" stroke-linejoin="round"/>
<path d="M785.2 781.5 L757.56 794.39 A30.5 30.5 0 0 0 815.70 781.50z" fill="#b01c10" stroke="#f2e6d4" stroke-width="0.9" stroke-linejoin="round"/>
<g fill="none" stroke="#999" stroke-width="1">
<polyline points="768,716.5 772.5,716.5 778,751"/>
<polyline points="792,811 797.5,845.5 803,845.5"/>
</g>
<text x="704" y="722" font-size="10" fill="#333">Eintragungen</text>
<text x="807" y="850" font-size="10" fill="#333">Austragungen</text>
</svg>
</body></html>
